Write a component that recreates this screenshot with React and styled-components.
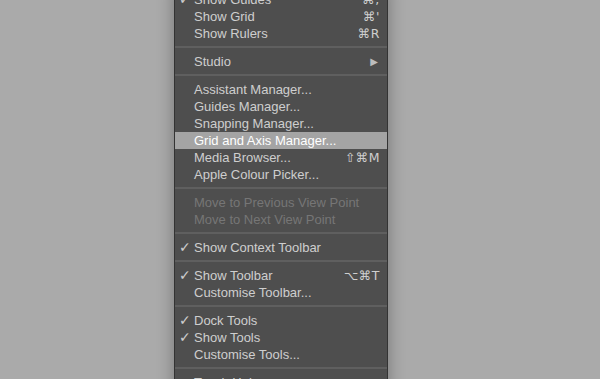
import React from "react";
import styled, { createGlobalStyle } from "styled-components";

const GlobalStyle = createGlobalStyle`
  html, body {
    margin: 0;
    padding: 0;
    height: 100%;
    background: #aaaaaa;
    overflow: hidden;
  }
`;

const Page = styled.div`
  width: 600px;
  height: 379px;
  background: #aaaaaa;
  padding-left: 174px;
  box-sizing: border-box;
  overflow: hidden;
`;

const Menu = styled.div`
  width: 214px;
  margin-top: -13px;
  padding: 4px 0;
  background: #4e4e4e;
  border-left: 1px solid #333;
  border-right: 1px solid #333;
  box-sizing: border-box;
  box-shadow: 0 0 16px rgba(0, 0, 0, 0.32);
  font-family: "Liberation Sans", Arial, sans-serif;
  font-size: 13px;
`;

const Row = styled.div`
  display: flex;
  align-items: center;
  height: 17px;
  padding: 0 7px 0 4px;
  color: ${(p) => (p.$active ? "#ffffff" : p.$disabled ? "#767676" : "#cecece")};
  background: ${(p) => (p.$active ? "#a4a4a4" : "transparent")};
`;

const Check = styled.span`
  width: 15px;
  font-family: "DejaVu Sans", sans-serif;
  font-size: 14px;
  line-height: 17px;
`;

const Label = styled.span`
  flex: 1;
  white-space: nowrap;
`;

const Shortcut = styled.span`
  font-family: "DejaVu Sans", "Liberation Sans", sans-serif;
  font-size: 12.5px;
  letter-spacing: 0.5px;
`;

const Arrow = styled.span`
  font-family: "DejaVu Sans", sans-serif;
  font-size: 10px;
  color: #bdbdbd;
  margin-right: 2px;
`;

const Separator = styled.div`
  height: 2px;
  margin: 4px 0 5px;
  background: #5f5f5f;
`;

const groups = [
  [
    { label: "Show Guides", check: true, key: "⌘;" },
    { label: "Show Grid", key: "⌘'" },
    { label: "Show Rulers", key: "⌘R" },
  ],
  [{ label: "Studio", sub: true }],
  [
    { label: "Assistant Manager..." },
    { label: "Guides Manager..." },
    { label: "Snapping Manager..." },
    { label: "Grid and Axis Manager...", active: true },
    { label: "Media Browser...", key: "⇧⌘M" },
    { label: "Apple Colour Picker..." },
  ],
  [
    { label: "Move to Previous View Point", disabled: true },
    { label: "Move to Next View Point", disabled: true },
  ],
  [{ label: "Show Context Toolbar", check: true }],
  [
    { label: "Show Toolbar", check: true, key: "⌥⌘T" },
    { label: "Customise Toolbar..." },
  ],
  [
    { label: "Dock Tools", check: true },
    { label: "Show Tools", check: true },
    { label: "Customise Tools..." },
  ],
  [{ label: "Touch Helper" }],
];

export default function App() {
  return (
    <>
      <GlobalStyle />
      <Page>
        <Menu>
          {groups.map((group, gi) => (
            <React.Fragment key={gi}>
              {gi > 0 && <Separator />}
              {group.map((item) => (
                <Row key={item.label} $active={item.active} $disabled={item.disabled}>
                  <Check>{item.check ? "✓" : ""}</Check>
                  <Label>{item.label}</Label>
                  {item.key && <Shortcut>{item.key}</Shortcut>}
                  {item.sub && <Arrow>▶</Arrow>}
                </Row>
              ))}
            </React.Fragment>
          ))}
        </Menu>
      </Page>
    </>
  );
}
